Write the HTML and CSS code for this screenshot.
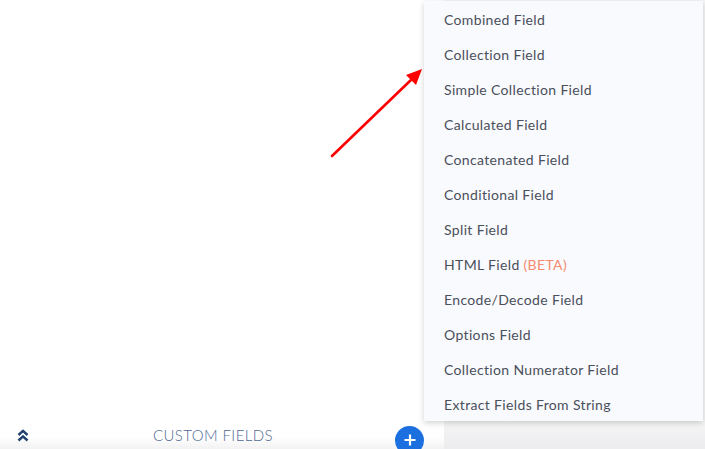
FILE: index.html
```html
<!DOCTYPE html>
<html>
<head>
<meta charset="utf-8">
<link rel="stylesheet" href="styles.css">
</head>
<body>
<div class="page">
  <div class="left">
    <div class="canvas">
      <svg class="arrow" width="110" height="110" viewBox="0 0 110 110">
        <line x1="12" y1="104" x2="92" y2="27" stroke="#ff0000" stroke-width="2.6" stroke-linecap="round"/>
        <polygon points="102,17 86,23 96,33" fill="#ff0000"/>
      </svg>
    </div>
    <div class="footer">
      <svg class="chev" width="12" height="13" viewBox="0 0 12 13">
        <path d="M1.5 6 L6 1.8 L10.5 6" fill="none" stroke="#22406e" stroke-width="2.4"/>
        <path d="M1.5 11.5 L6 7.3 L10.5 11.5" fill="none" stroke="#22406e" stroke-width="2.4"/>
      </svg>
      <span class="title">CUSTOM FIELDS</span>
      <span class="plus">
        <svg width="14" height="14" viewBox="0 0 14 14">
          <path d="M7 1.5 V12.5 M1.5 7 H12.5" stroke="#fff" stroke-width="2.2"/>
        </svg>
      </span>
    </div>
  </div>
  <div class="right"></div>
  <ul class="menu">
    <li>Combined Field</li>
    <li>Collection Field</li>
    <li>Simple Collection Field</li>
    <li>Calculated Field</li>
    <li>Concatenated Field</li>
    <li>Conditional Field</li>
    <li>Split Field</li>
    <li>HTML Field <span class="beta">(BETA)</span></li>
    <li>Encode/Decode Field</li>
    <li>Options Field</li>
    <li>Collection Numerator Field</li>
    <li>Extract Fields From String</li>
  </ul>
</div>
</body>
</html>
```
FILE: styles.css
```css
html, body {
  margin: 0;
  padding: 0;
  width: 705px;
  height: 449px;
  overflow: hidden;
  font-family: "Lato", "Noto Sans", sans-serif;
}
.page {
  position: relative;
  display: flex;
  width: 705px;
  height: 449px;
  background: #fff;
}
.left {
  width: 444px;
  display: flex;
  flex-direction: column;
  background: #fff;
}
.canvas {
  flex: 1;
  position: relative;
}
.arrow {
  position: absolute;
  left: 320px;
  top: 52px;
}
.footer {
  height: 30px;
  display: flex;
  align-items: center;
  padding: 0 0 0 17px;
  background: linear-gradient(to bottom, #fff 0%, #fff 60%, #f2f2f2 100%);
  box-sizing: border-box;
}
.chev {
  display: block;
  margin-top: 2px;
}
.title {
  margin-left: 124px;
  color: #4f6a92;
  font-size: 15px;
  font-weight: 300;
  letter-spacing: 0.4px;
  margin-top: 2px;
}
.plus {
  margin-left: auto;
  margin-right: 20px;
  width: 29px;
  height: 29px;
  border-radius: 50%;
  background: #1b6fdf;
  display: flex;
  align-items: center;
  justify-content: center;
  margin-top: 12px;
}
.plus svg { display: block; }
.right {
  flex: 1;
  background: linear-gradient(to bottom, #f5f5f6 0%, #f5f5f6 94%, #ececee 100%);
}
.menu {
  position: absolute;
  left: 424px;
  top: 1px;
  width: 279px;
  margin: 0;
  padding: 1px 0 0 0;
  list-style: none;
  background: #f9fafd;
  box-shadow: 0 2px 6px rgba(0,0,0,0.18);
  height: 420px;
  box-sizing: border-box;
}
.menu li {
  height: 35px;
  line-height: 35px;
  padding-left: 20px;
  font-size: 14px;
  letter-spacing: 0.35px;
  color: #4a4f5b;
}
.beta {
  color: #f58a70;
}
```
